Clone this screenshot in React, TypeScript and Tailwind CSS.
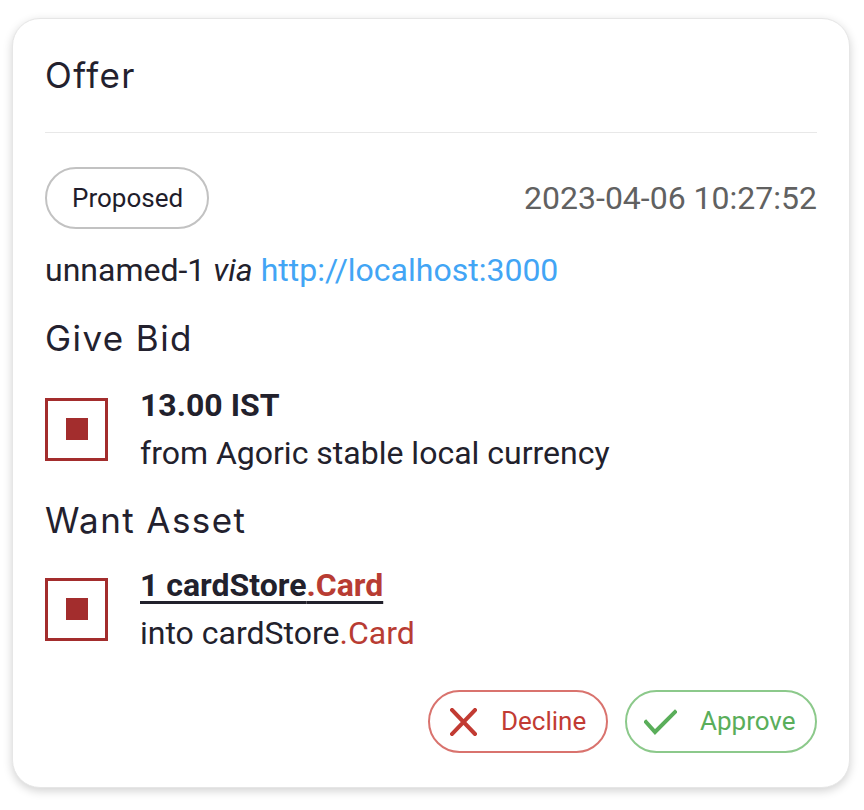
import React from "react";

const heading = "font-['Inter',sans-serif] text-[35px] font-normal tracking-[0.04em] text-[#23212e]";

function AssetIcon() {
  return (
    <div className="w-[63px] h-[63px] border-[3px] border-[#a32d2d] flex items-center justify-center shrink-0">
      <div className="w-[22px] h-[22px] bg-[#a32d2d]" />
    </div>
  );
}

export default function App() {
  return (
    <div className="w-[864px] h-[810px] bg-white pt-[18px] pl-[12px] font-['Roboto',sans-serif]">
      <div className="w-[838px] rounded-[28px] bg-white border border-[#e6e6e6] shadow-[0_3px_10px_rgba(0,0,0,0.18)] px-[32px] pb-[34px]">
        <div className="h-[114px] flex items-center border-b-[1.5px] border-[#e8e8e8]">
          <div className={heading}>Offer</div>
        </div>

        <div className="mt-[34px] flex items-center justify-between">
          <div className="h-[62px] pl-[25px] pr-[24px] rounded-full border-2 border-[#c2c2c2] flex items-center text-[26px] text-[#1f1d2b]">
            Proposed
          </div>
          <div className="text-[32px] text-[#616161]">2023-04-06 10:27:52</div>
        </div>

        <div className="mt-[21px] h-[40px] leading-[40px] text-[32px] text-[#22212c]">
          unnamed-1 <i>via</i> <span className="text-[#42a5f5]">http://localhost:3000</span>
        </div>

        <div className={`mt-[26px] h-[44px] leading-[44px] ${heading}`}>Give Bid</div>

        <div className="mt-[21px] flex items-center gap-[32px]">
          <AssetIcon />
          <div className="text-[32px] leading-[48px] text-[#22212c]">
            <div className="font-bold">13.00 IST</div>
            <div>from Agoric stable local currency</div>
          </div>
        </div>

        <div className={`mt-[21px] h-[44px] leading-[44px] ${heading}`}>Want Asset</div>

        <div className="mt-[19px] flex items-center gap-[32px]">
          <AssetIcon />
          <div className="text-[32px] leading-[48px] text-[#22212c]">
            <div className="font-bold underline decoration-[3px] underline-offset-[5px]">
              1 cardStore<span className="text-[#b83c33]">.Card</span>
            </div>
            <div>
              into cardStore<span className="text-[#b83c33]">.Card</span>
            </div>
          </div>
        </div>

        <div className="mt-[33px] flex justify-end gap-[17px]">
          <button className="h-[63px] w-[180px] rounded-full border-2 border-[#d9736e] flex items-center pl-[20px] text-[26px] text-[#c23b33]">
            <svg width="27" height="28" viewBox="0 0 27 28" className="shrink-0">
              <path d="M2 2 L25 26 M25 2 L2 26" stroke="#c23b33" strokeWidth="4" strokeLinecap="square" />
            </svg>
            <span className="ml-[24px]">Decline</span>
          </button>
          <button className="h-[63px] w-[192px] rounded-full border-2 border-[#8cc98b] flex items-center pl-[17px] text-[26px] text-[#5aae5a]">
            <svg width="33" height="26" viewBox="0 0 33 26" className="shrink-0">
              <path d="M2 13 L11 23 L31 3" stroke="#5aae5a" strokeWidth="4" fill="none" strokeLinecap="square" />
            </svg>
            <span className="ml-[23px]">Approve</span>
          </button>
        </div>
      </div>
    </div>
  );
}
